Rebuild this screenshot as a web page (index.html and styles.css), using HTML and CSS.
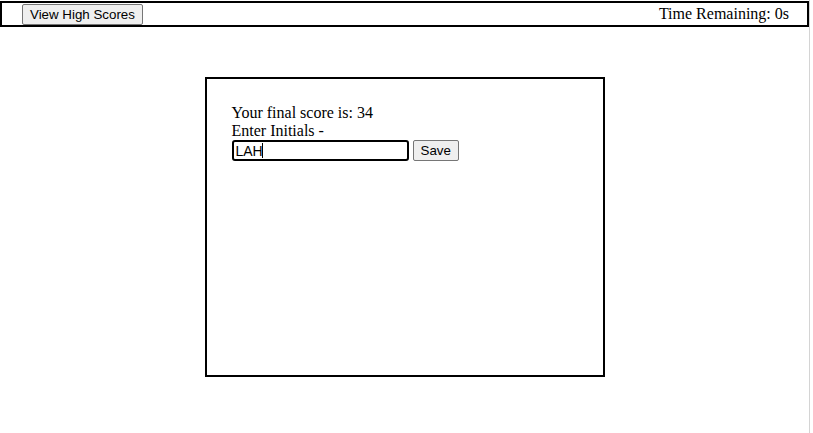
FILE: index.html
```html
<!DOCTYPE html>
<html>
<head>
<meta charset="utf-8">
<link rel="stylesheet" href="styles.css">
</head>
<body>
<div class="page">
  <div class="main">
    <header class="topbar">
      <button class="btn">View High Scores</button>
      <span class="timer">Time Remaining: 0s</span>
    </header>
    <section class="card">
      <div>Your final score is: 34</div>
      <div>Enter Initials -</div>
      <div class="form-row">
        <span class="field">
          <input class="initials" type="text" value="LAH">
          <span class="caret"></span>
        </span>
        <button class="btn save">Save</button>
      </div>
    </section>
  </div>
  <div class="edge"></div>
</div>
</body>
</html>
```
FILE: styles.css
```css
html, body {
  margin: 0;
  padding: 0;
  background: #fff;
}
body {
  font-family: "Liberation Serif", "Times New Roman", serif;
  font-size: 16px;
  color: #000;
}
.page {
  display: flex;
  height: 433px;
}
.main {
  flex: 1;
  padding-top: 1px;
}
.edge {
  width: 3px;
  border-left: 1px solid #d4d4d4;
  background: #fff;
}
.topbar {
  display: flex;
  justify-content: space-between;
  align-items: center;
  border: 2px solid #000;
  height: 22px;
  padding: 0 18px 0 20px;
}
.btn {
  font-family: "Liberation Sans", Arial, sans-serif;
  font-size: 13.33px;
  background: #efefef;
  border: 1px solid #767676;
  border-radius: 2px;
  padding: 1px 7px;
  height: 21px;
  color: #000;
}
.timer {
  line-height: 18px;
}
.card {
  width: 346px;
  height: 246px;
  margin: 50px auto 0;
  border: 2px solid #000;
  padding: 25px;
  line-height: 18px;
}
.form-row {
  display: flex;
  align-items: center;
  gap: 4px;
}
.field {
  position: relative;
  display: flex;
}
.initials {
  box-sizing: border-box;
  width: 177px;
  height: 21px;
  border: 2px solid #000;
  border-radius: 3px;
  padding: 1px 2px;
  font-family: "Liberation Sans", Arial, sans-serif;
  font-size: 14px;
  margin: 0;
  outline: none;
}
.caret {
  position: absolute;
  left: 30px;
  top: 3px;
  width: 1px;
  height: 15px;
  background: #000;
}
.save {
  margin: 0;
}
```
